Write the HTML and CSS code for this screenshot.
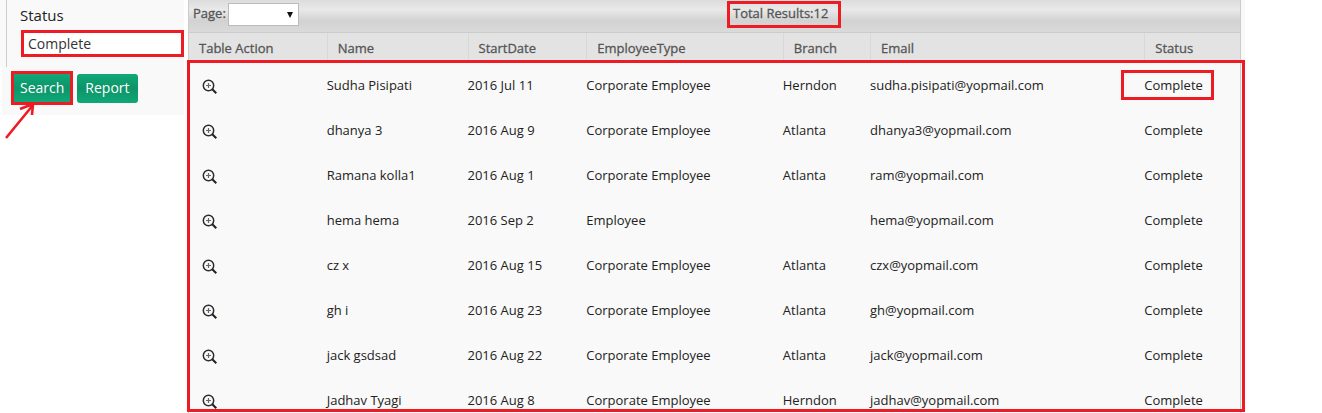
FILE: index.html
```html
<!DOCTYPE html>
<html lang="en">
<head>
<meta charset="utf-8">
<title>Employee Search</title>
<link rel="stylesheet" href="styles.css">
</head>
<body>
<svg class="symbols" aria-hidden="true">
  <symbol id="zoom" viewBox="0 0 16 16">
    <circle cx="6.5" cy="6.5" r="5.2" fill="none" stroke="#2b2b33" stroke-width="1.5"/>
    <path d="M4 6.5h5M6.5 4v5" stroke="#666" stroke-width="1.2"/>
    <path d="M10.3 10.3l4 4" stroke="#222" stroke-width="2"/>
  </symbol>
</svg>
<div class="page">
  <form class="sidebar">
    <div class="filter">
      <label for="status">Status</label>
      <input id="status" class="field" type="text" value="Complete">
    </div>
    <div class="actions">
      <button class="btn marked" type="button">Search</button>
      <button class="btn" type="button">Report</button>
      <svg class="arrow" viewBox="0 0 32 40" aria-hidden="true"><path d="M2 37L29 4M16 8L29 3L28 14" fill="none" stroke="#ed1c24" stroke-width="2.6"/></svg>
    </div>
  </form>
  <main class="results">
    <div class="toolbar">
      <div class="pager"><label for="page">Page:</label><select id="page"><option></option></select><svg class="caret" viewBox="0 0 6 6" aria-hidden="true"><path d="M0 0h6L3 6z"/></svg></div>
      <div class="total">Total Results:12</div>
    </div>
    <div class="grid">
      <table>
        <colgroup><col class="c-action"><col class="c-name"><col class="c-date"><col class="c-type"><col class="c-branch"><col class="c-email"><col class="c-status"></colgroup>
        <thead><tr><th>Table Action</th><th>Name</th><th>StartDate</th><th>EmployeeType</th><th>Branch</th><th>Email</th><th>Status</th></tr></thead>
        <tbody>
          <tr><td><svg class="zoom"><use href="#zoom"/></svg></td><td>Sudha Pisipati</td><td>2016 Jul 11</td><td>Corporate Employee</td><td>Herndon</td><td>sudha.pisipati@yopmail.com</td><td><span class="callout">Complete</span></td></tr>
          <tr><td><svg class="zoom"><use href="#zoom"/></svg></td><td>dhanya 3</td><td>2016 Aug 9</td><td>Corporate Employee</td><td>Atlanta</td><td>dhanya3@yopmail.com</td><td>Complete</td></tr>
          <tr><td><svg class="zoom"><use href="#zoom"/></svg></td><td>Ramana kolla1</td><td>2016 Aug 1</td><td>Corporate Employee</td><td>Atlanta</td><td>ram@yopmail.com</td><td>Complete</td></tr>
          <tr><td><svg class="zoom"><use href="#zoom"/></svg></td><td>hema hema</td><td>2016 Sep 2</td><td>Employee</td><td></td><td>hema@yopmail.com</td><td>Complete</td></tr>
          <tr><td><svg class="zoom"><use href="#zoom"/></svg></td><td>cz x</td><td>2016 Aug 15</td><td>Corporate Employee</td><td>Atlanta</td><td>czx@yopmail.com</td><td>Complete</td></tr>
          <tr><td><svg class="zoom"><use href="#zoom"/></svg></td><td>gh i</td><td>2016 Aug 23</td><td>Corporate Employee</td><td>Atlanta</td><td>gh@yopmail.com</td><td>Complete</td></tr>
          <tr><td><svg class="zoom"><use href="#zoom"/></svg></td><td>jack gsdsad</td><td>2016 Aug 22</td><td>Corporate Employee</td><td>Atlanta</td><td>jack@yopmail.com</td><td>Complete</td></tr>
          <tr><td><svg class="zoom"><use href="#zoom"/></svg></td><td>Jadhav Tyagi</td><td>2016 Aug 8</td><td>Corporate Employee</td><td>Herndon</td><td>jadhav@yopmail.com</td><td>Complete</td></tr>
        </tbody>
      </table>
    </div>
    <div class="highlight"></div>
  </main>
</div>
</body>
</html>
```

FILE: styles.css
```css
* { box-sizing: border-box; }
body { margin: 0; background: #fff; color: #222; font: 13px/18px "Open Sans", "Noto Sans", sans-serif; }
.symbols { position: absolute; width: 0; height: 0; }
.page { display: flex; height: 100vh; overflow: hidden; padding-right: 77px; }

.sidebar { flex: 0 0 184px; }
.filter { background: linear-gradient(#ccc, #ccc) 6px 0 / 1px 100% no-repeat #f9f9f9; padding: 5px 0 10px 20px; }
.filter label { display: block; font-size: 15px; line-height: 20px; margin-bottom: 5px; }
.field { display: block; width: calc(100% - 1px); height: 27px; margin-left: 1px; padding: 0 4px; border: 3px solid #ed1c24; border-radius: 0; background: #fff; color: #333; font: inherit; font-size: 14px; outline: 0; }
.actions { position: relative; display: flex; align-items: center; gap: 4px; height: 48px; margin-left: 2px; padding: 0 0 6px 9px; background: #f9f9f9; }
.btn { height: 29px; padding: 0 8px; border: 0; border-radius: 3px; background: linear-gradient(#0fa876, #0d9468 50%, #0fa876); color: #fff; font: inherit; font-size: 14px; }
.marked { height: 34px; padding: 0 6px; border: 3px solid #ed1c24; border-radius: 0; }
.arrow { position: absolute; left: 2px; top: 34px; width: 32px; height: 40px; }

.results { position: relative; flex: 1; min-width: 0; display: flex; flex-direction: column; margin-left: 4px; padding-right: 4px; background: #f9f9f9; }
.toolbar { display: grid; grid-template-columns: 51% 1fr; align-items: start; height: 33px; border: 1px solid #ccc; border-top: 0; background: linear-gradient(#dcdcdc, #e9e9e9 30%, #d2d2d2 65%, #dadada); color: #555; -webkit-text-stroke: 0.3px #555; }
.pager { position: relative; display: flex; align-items: center; gap: 2px; padding: 3px 0 0 4px; }
.pager label { padding-bottom: 3px; }
.pager select { appearance: none; width: 71px; height: 23px; border: 1px solid #bbb; border-radius: 0; background: #fff; }
.caret { width: 6px; height: 6px; margin-left: -14px; fill: #111; z-index: 1; }
.total { justify-self: start; margin: 1px 0 0 2px; padding: 0 10px 2px 3px; border: 3px solid #ed1c24; line-height: 19px; }
.grid { flex: 1; min-height: 0; overflow: hidden; border: 1px solid #ccc; border-width: 0 1px; }
table { width: 100%; table-layout: fixed; border-collapse: separate; border-spacing: 0; }
.c-action { width: 13.1%; }
.c-name { width: 13.4%; }
.c-date { width: 11.3%; }
.c-type { width: 18.7%; }
.c-branch { width: 8.3%; }
.c-email { width: 26.1%; }
.c-status { width: 9.1%; }
th { height: 30px; padding: 0 0 0 10px; border-left: 1px solid #d8d8d8; background: #e3e3e3; color: #555; font-weight: 400; text-align: left; -webkit-text-stroke: 0.3px #555; }
th:first-child { border-left: 0; }
td { height: 45px; padding: 0 0 2px; white-space: nowrap; }
td:first-child { padding-left: 13px; }
.zoom { display: block; width: 16px; height: 16px; margin-top: 5px; }
.callout { position: relative; }
.callout::after { content: ""; position: absolute; inset: -6px -11px -6px -23px; border: 3px solid #ed1c24; }
.highlight { position: absolute; inset: 60px 0 1px -1px; border: 3px solid #ed1c24; }
```
